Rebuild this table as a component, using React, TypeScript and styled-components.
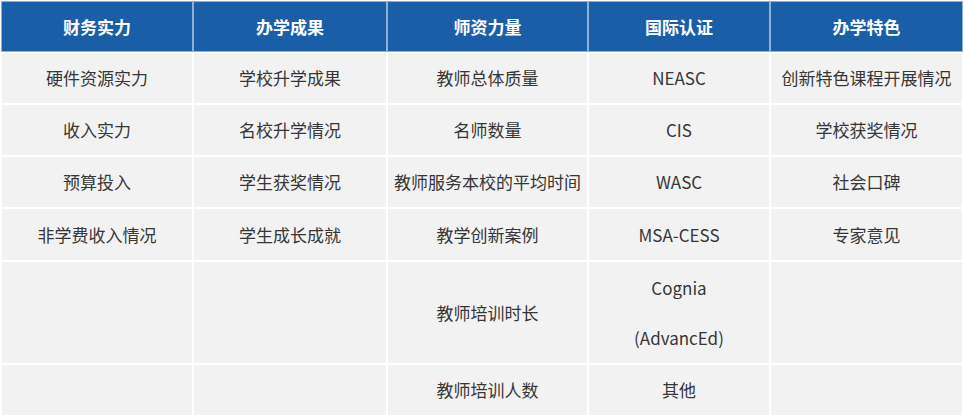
import * as React from "react";
import styled, { createGlobalStyle } from "styled-components";

const GlobalStyle = createGlobalStyle`
  html, body {
    margin: 0;
    padding: 0;
    background: #ffffff;
  }
  body {
    font-family: "Noto Sans CJK SC", "Noto Sans", sans-serif;
  }
`;

const Table = styled.table`
  border-collapse: separate;
  border-spacing: 2px;
  table-layout: fixed;
  width: 964px;
  background: #ffffff;
`;

const Col = styled.col<{ $w: number }>`
  width: ${(p) => p.$w}px;
`;

const HeadCell = styled.th`
  height: 49px;
  padding: 0;
  background: #1b5ea8;
  box-shadow: 0 0 0 1px #8db0d8;
  color: #ffffff;
  font-size: 17px;
  line-height: 49px;
  font-weight: 700;
  text-align: center;
  vertical-align: middle;
`;

const Cell = styled.td<{ $h: number }>`
  height: ${(p) => p.$h}px;
  padding: 0;
  background: #f2f2f2;
  color: #363636;
  font-size: 17px;
  line-height: 50px;
  text-align: center;
  vertical-align: middle;
  white-space: nowrap;
`;

const widths = [190, 192, 199, 180, 191];
const heads = ["财务实力", "办学成果", "师资力量", "国际认证", "办学特色"];
const heights = [50, 50, 50, 51, 101, 50];

const rows: string[][] = [
  ["硬件资源实力", "学校升学成果", "教师总体质量", "NEASC", "创新特色课程开展情况"],
  ["收入实力", "名校升学情况", "名师数量", "CIS", "学校获奖情况"],
  ["预算投入", "学生获奖情况", "教师服务本校的平均时间", "WASC", "社会口碑"],
  ["非学费收入情况", "学生成长成就", "教学创新案例", "MSA-CESS", "专家意见"],
  ["", "", "教师培训时长", "Cognia\n(AdvancEd)", ""],
  ["", "", "教师培训人数", "其他", ""],
];

export default function App() {
  return (
    <>
      <GlobalStyle />
      <Table>
        <colgroup>
          {widths.map((w, i) => (
            <Col key={i} $w={w} />
          ))}
        </colgroup>
        <thead>
          <tr>
            {heads.map((h) => (
              <HeadCell key={h}>{h}</HeadCell>
            ))}
          </tr>
        </thead>
        <tbody>
          {rows.map((row, r) => (
            <tr key={r}>
              {row.map((text, c) => (
                <Cell key={c} $h={heights[r]}>
                  {text.split("\n").map((line, i) => (
                    <React.Fragment key={i}>
                      {i > 0 && <br />}
                      {line}
                    </React.Fragment>
                  ))}
                </Cell>
              ))}
            </tr>
          ))}
        </tbody>
      </Table>
    </>
  );
}
